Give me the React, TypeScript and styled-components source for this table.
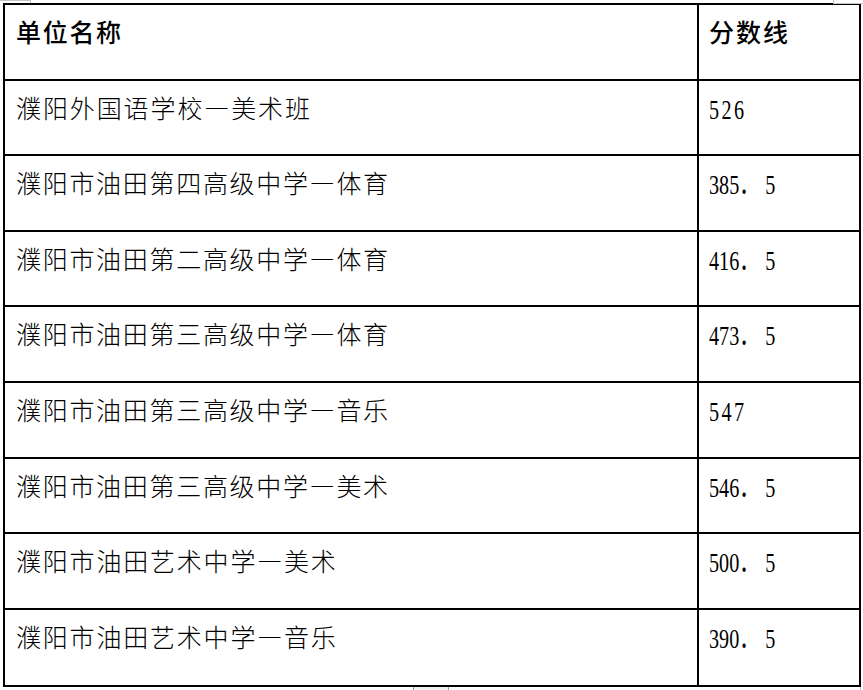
import React from 'react';
import styled, { createGlobalStyle } from 'styled-components';

const Global = createGlobalStyle`
  html, body { margin: 0; padding: 0; background: #fff; }
  body { width: 863px; height: 690px; overflow: hidden; }
`;

const Page = styled.div`
  position: relative;
  width: 863px;
  height: 690px;
  padding: 3px 0 0 3px;
  box-sizing: border-box;
  background: #fff;
`;

const Grid = styled.div`
  display: grid;
  grid-template-columns: 694px 162px;
  grid-template-rows: repeat(8, 75.6px) 77px;
  width: 858px;
  box-sizing: border-box;
  border-top: 2px solid #000;
  border-left: 2px solid #000;
`;

const Cell = styled.div`
  box-sizing: border-box;
  border-right: 2px solid #000;
  border-bottom: 2px solid #000;
  padding: 14px 0 0 11px;
  white-space: nowrap;
  color: #000;
`;

const NumCell = styled(Cell)`
  padding: 16px 0 0 10px;
`;

const HeadCell = styled(Cell)<{ $num?: boolean }>`
  padding-left: ${(p) => (p.$num ? 10 : 11)}px;
`;

const HeadText = styled.span<{ $sp: number }>`
  font-family: "Noto Sans CJK SC", sans-serif;
  font-size: 25px;
  line-height: 25px;
  font-weight: 500;
  letter-spacing: ${(p) => p.$sp}px;
`;

const NameText = styled.span<{ $sp: number }>`
  font-family: "Noto Sans CJK SC", sans-serif;
  font-size: 25px;
  line-height: 25px;
  font-weight: 300;
  letter-spacing: ${(p) => p.$sp}px;
`;

const Num = styled.span<{ $sp: number }>`
  display: inline-block;
  font-family: "Liberation Serif", "Noto Sans CJK SC", serif;
  font-size: 28px;
  line-height: 25px;
  letter-spacing: ${(p) => p.$sp}px;
  transform: scaleX(0.72);
  transform-origin: left center;
`;

const Dot = styled.span`
  margin-right: 8px;
`;

const Mark = styled.div`
  position: absolute;
  box-sizing: border-box;
  border-color: #c4c4c4;
  border-style: solid;
  border-width: 0;
`;

const TopLeftMark = styled(Mark)`
  left: 0;
  top: 0;
  width: 31px;
  height: 3px;
  border-top-width: 1px;
  border-right-width: 1px;
`;

const TopRightMark = styled(Mark)`
  left: 833px;
  top: 0;
  width: 30px;
  height: 4px;
  border-left-width: 1px;
  border-bottom-width: 1px;
`;

const BottomHandle = styled(Mark)`
  left: 413px;
  top: 687px;
  width: 36px;
  height: 3px;
  background: #f0f0f0;
  border-color: #999;
  border-left-width: 1px;
  border-right-width: 1px;
`;

const BottomRightMark = styled(Mark)`
  left: 860px;
  top: 687px;
  width: 1px;
  height: 3px;
  border-left-width: 1px;
`;

type Row = { name: string; score: string; nameSp: number; numSp: number };

const rows: Row[] = [
  { name: '濮阳外国语学校—美术班', score: '526', nameSp: 1.9, numSp: 3.4 },
  { name: '濮阳市油田第四高级中学—体育', score: '385．5', nameSp: 1.7, numSp: 0 },
  { name: '濮阳市油田第二高级中学—体育', score: '416．5', nameSp: 1.7, numSp: 0 },
  { name: '濮阳市油田第三高级中学—体育', score: '473．5', nameSp: 1.7, numSp: 0 },
  { name: '濮阳市油田第三高级中学—音乐', score: '547', nameSp: 1.7, numSp: 3.4 },
  { name: '濮阳市油田第三高级中学—美术', score: '546．5', nameSp: 1.7, numSp: 0 },
  { name: '濮阳市油田艺术中学—美术', score: '500．5', nameSp: 1.8, numSp: 0 },
  { name: '濮阳市油田艺术中学—音乐', score: '390．5', nameSp: 1.8, numSp: 0 },
];

function Score({ value, sp }: { value: string; sp: number }) {
  const parts = value.split('．');
  return (
    <Num $sp={sp}>
      {parts.length > 1 ? (
        <>
          {parts[0]}
          <Dot>．</Dot>
          {parts[1]}
        </>
      ) : (
        value
      )}
    </Num>
  );
}

export default function App() {
  return (
    <Page lang="zh-CN">
      <Global />
      <TopLeftMark />
      <TopRightMark />
      <Grid>
        <HeadCell>
          <HeadText $sp={1.7}>单位名称</HeadText>
        </HeadCell>
        <HeadCell $num>
          <HeadText $sp={2}>分数线</HeadText>
        </HeadCell>
        {rows.map((r) => (
          <React.Fragment key={r.name}>
            <Cell>
              <NameText $sp={r.nameSp}>{r.name}</NameText>
            </Cell>
            <NumCell>
              <Score value={r.score} sp={r.numSp} />
            </NumCell>
          </React.Fragment>
        ))}
      </Grid>
      <BottomHandle />
      <BottomRightMark />
    </Page>
  );
}
